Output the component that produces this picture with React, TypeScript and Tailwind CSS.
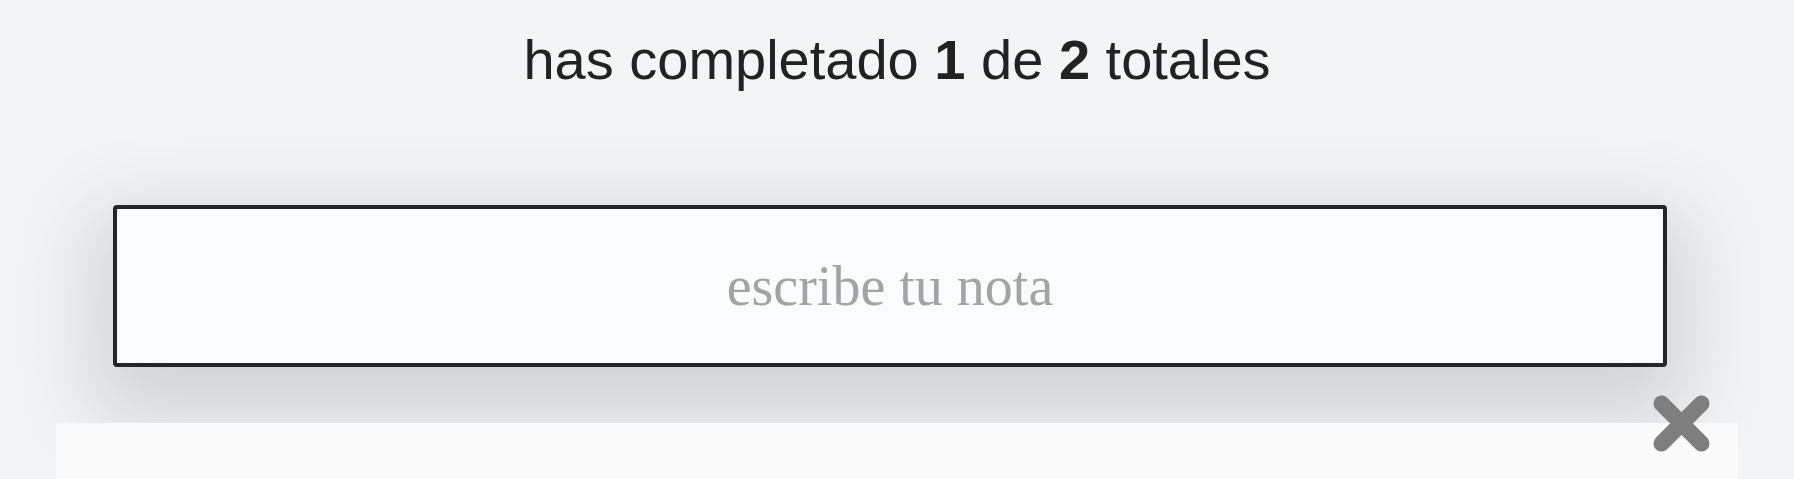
const App = () => {
  return (
    <div className="h-screen overflow-hidden bg-[#f3f4f5] font-['Liberation_Sans',Arial,sans-serif]">
      <h1 className="pt-[32px] text-center text-[56px] leading-none font-normal text-[#222222]">
        has completado <b className="font-bold">1</b> de <b className="font-bold">2</b> totales
      </h1>

      <div className="mt-[117px] ml-[113px] w-[1554px] h-[162px] rounded-[4px] border-4 border-[#222529] bg-[#f9fbfd] shadow-[0_30px_80px_24px_rgba(40,50,60,0.16)]">
        <input
          type="text"
          placeholder="escribe tu nota"
          className="h-full w-full bg-transparent text-center text-[56px] font-['Liberation_Serif','Times_New_Roman',serif] text-[#333] outline-none placeholder:text-[#a3a3a3]"
        />
      </div>

      <div className="relative mx-[56px] mt-[56px] h-[56px] bg-[#fafafa]">
        <button className="absolute -top-[28px] right-[28px] h-[57px] w-[57px]" aria-label="cerrar">
          <svg viewBox="0 0 57 57" width="57" height="57">
            <path
              d="M8.5 8.5 L48.5 48.5 M48.5 8.5 L8.5 48.5"
              stroke="#7e7e7e"
              strokeWidth="16"
              strokeLinecap="round"
              fill="none"
            />
          </svg>
        </button>
      </div>
    </div>
  );
};

export default App;
